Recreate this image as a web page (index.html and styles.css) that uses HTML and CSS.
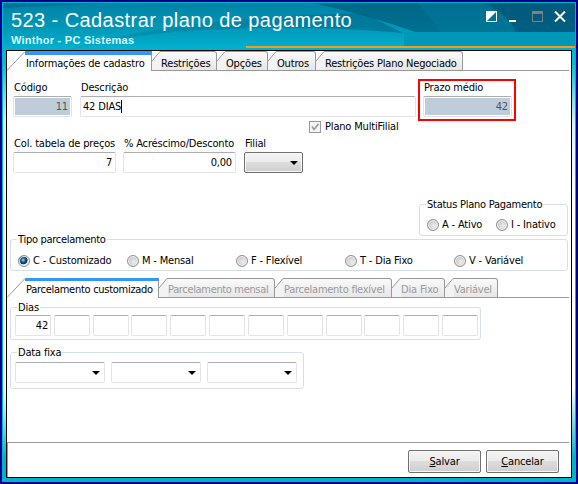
FILE: index.html
```html
<!DOCTYPE html>
<html lang="pt-BR">
<head>
<meta charset="utf-8">
<title>523 - Cadastrar plano de pagamento</title>
<link rel="stylesheet" href="styles.css">
</head>
<body>
<main class="window">
  <svg class="backdrop" viewBox="0 0 572 48" aria-hidden="true">
    <defs>
      <linearGradient id="sky" x2="0" y2="1"><stop offset="0" stop-color="#0082a6"/><stop offset=".5" stop-color="#0097b7"/><stop offset="1" stop-color="#00b4d0"/></linearGradient>
      <linearGradient id="ray" x2="1" y2="0"><stop offset="0" stop-color="#007d9f" stop-opacity=".3"/><stop offset="1" stop-color="#006084" stop-opacity=".55"/></linearGradient>
    </defs>
    <rect width="572" height="48" fill="url(#sky)"/>
    <path d="M0 5Q55 2 120 0H0Z" fill="#00668c" opacity=".6"/>
    <path d="M62 48Q160 15 360 10L400 30Q290 20 170 29Q110 35 62 48Z" fill="url(#ray)"/>
    <path d="M310 0H572V29H412Q365 12 310 0Z" fill="#00597a" opacity=".65"/>
    <path d="M480 0H572V29H513Q505 12 480 0Z" fill="#00476a" opacity=".4"/>
    <path d="M415 0H485Q506 12 513 29H438Z" fill="#0083a5" opacity=".3"/>
    <rect x="401" y="29" width="171" height="14" fill="#0098b8"/>
    <rect x="243" y="43" width="329" height="2" fill="#ff9a16"/>
  </svg>
  <header class="titlebar">
    <div>
      <h1>523 - Cadastrar plano de pagamento</h1>
      <p>Winthor - PC Sistemas</p>
    </div>
    <svg class="controls" width="81" height="12" viewBox="0 0 81 12" aria-hidden="true">
      <path d="M.5.5H10.5V10.5H.5Z" fill="none" stroke="#fff"/><path d="M0 0H11L0 11Z" fill="#fff"/>
      <path d="M23 9H30V11H23Z" fill="#fff"/>
      <path d="M46 0H57V11H46ZM47 3V10H56V3Z" fill="#808080" fill-rule="evenodd"/>
      <path d="M69 .5L79 10.5M79 .5L69 10.5" stroke="#fff" stroke-width="2"/>
    </svg>
  </header>

  <section class="panel">
    <nav class="tabs">
      <div class="tab active t1"><svg width="18" height="20"><path d="M0 19.5L18 .5"/></svg><span>Informações de cadastro</span></div>
      <div class="tab t2"><svg width="9" height="20"><path class="fill" d="M0 20V10L8 1H9V20Z"/><path d="M0 10L8 .5H9M0 19.5H9"/></svg><span>Restrições</span></div>
      <div class="tab t3"><svg width="9" height="20"><path class="fill" d="M0 20V10L8 1H9V20Z"/><path d="M0 10L8 .5H9M0 19.5H9"/></svg><span>Opções</span></div>
      <div class="tab t4"><svg width="9" height="20"><path class="fill" d="M0 20V10L8 1H9V20Z"/><path d="M0 10L8 .5H9M0 19.5H9"/></svg><span>Outros</span></div>
      <div class="tab t5"><svg width="9" height="20"><path class="fill" d="M0 20V10L8 1H9V20Z"/><path d="M0 10L8 .5H9M0 19.5H9"/></svg><span>Restrições Plano Negociado</span></div>
    </nav>

    <div class="row main-row">
      <label class="field code"><span>Código</span><span class="input disabled">11</span></label>
      <label class="field desc"><span>Descrição</span><span class="input left">42 DIAS<i class="caret"></i></span></label>
      <label class="field term"><span>Prazo médio</span><span class="input disabled">42</span></label>
    </div>
    <div class="multi">
      <svg width="12" height="12"><rect x=".5" y=".5" width="11" height="11" fill="#f4f4f4" stroke="#9a9a9a"/><path d="M3 5.5L5 8.5L9.5 3" fill="none" stroke="#999" stroke-width="1.6"/></svg>
      <span>Plano MultiFilial</span>
    </div>
    <div class="row second-row">
      <label class="field col"><span>Col. tabela de preços</span><span class="input">7</span></label>
      <label class="field pct"><span>% Acréscimo/Desconto</span><span class="input">0,00</span></label>
      <label class="field branch"><span>Filial</span><span class="combo button-face"><svg width="8" height="4"><path d="M0 0H8L4 4Z"/></svg></span></label>
    </div>

    <div class="group status">
      <span class="legend">Status Plano Pagamento</span>
      <span class="radio"><i></i>A - Ativo</span><span class="radio"><i></i>I - Inativo</span>
    </div>
    <div class="group kind">
      <span class="legend">Tipo parcelamento</span>
      <span class="radio on"><i></i>C - Customizado</span><span class="radio"><i></i>M - Mensal</span><span class="radio"><i></i>F - Flexível</span><span class="radio"><i></i>T - Dia Fixo</span><span class="radio"><i></i>V - Variável</span>
    </div>

    <nav class="tabs lower">
      <div class="tab active u1"><svg width="18" height="20"><path d="M0 19.5L18 .5"/></svg><span>Parcelamento customizado</span></div>
      <div class="tab u2"><svg width="9" height="20"><path class="fill" d="M0 20V10L8 1H9V20Z"/><path d="M0 10L8 .5H9M0 19.5H9"/></svg><span>Parcelamento mensal</span></div>
      <div class="tab u3"><svg width="9" height="20"><path class="fill" d="M0 20V10L8 1H9V20Z"/><path d="M0 10L8 .5H9M0 19.5H9"/></svg><span>Parcelamento flexível</span></div>
      <div class="tab u4"><svg width="9" height="20"><path class="fill" d="M0 20V10L8 1H9V20Z"/><path d="M0 10L8 .5H9M0 19.5H9"/></svg><span>Dia Fixo</span></div>
      <div class="tab u5"><svg width="9" height="20"><path class="fill" d="M0 20V10L8 1H9V20Z"/><path d="M0 10L8 .5H9M0 19.5H9"/></svg><span>Variável</span></div>
    </nav>

    <div class="group days">
      <span class="legend">Dias</span>
      <span class="input">42</span><span class="input"></span><span class="input"></span><span class="input"></span><span class="input"></span><span class="input"></span><span class="input"></span><span class="input"></span><span class="input"></span><span class="input"></span><span class="input"></span><span class="input"></span>
    </div>
    <div class="group dates">
      <span class="legend">Data fixa</span>
      <span class="input combo"><svg width="8" height="4"><path d="M0 0H8L4 4Z"/></svg></span><span class="input combo"><svg width="8" height="4"><path d="M0 0H8L4 4Z"/></svg></span><span class="input combo"><svg width="8" height="4"><path d="M0 0H8L4 4Z"/></svg></span>
    </div>

    <footer>
      <button class="button-face"><u>S</u>alvar</button>
      <button class="button-face"><u>C</u>ancelar</button>
    </footer>
  </section>
</main>
</body>
</html>
```
FILE: styles.css
```css
* { box-sizing: border-box; }
body {
  margin: 0;
  width: 578px;
  height: 484px;
  overflow: hidden;
  background: #00008b;
  font: 11px/14px "DejaVu Sans Condensed", "DejaVu Sans", sans-serif;
  font-stretch: condensed;
  letter-spacing: -0.17px;
  color: #000;
  padding: 2px;
}
.window {
  position: relative;
  width: 574px;
  height: 480px;
  border: 1px solid #00b4c8;
  background: linear-gradient(#00b4d0 0, #00c0d0 60px, #d8f4f8 120px, #fff 200px, #fff 385px, #00b4c8 455px);
  padding: 0 3px 3px;
}
.backdrop { position: absolute; left: 0; top: 0; width: 572px; height: 48px; }
.titlebar {
  position: relative;
  height: 47px;
  display: flex;
  justify-content: space-between;
  padding: 4px 5px 0 5px;
  color: #fff;
  font-family: "Liberation Sans", Arial, sans-serif;
}
h1 { margin: 0; font-size: 20px; line-height: 26px; font-weight: 400; letter-spacing: 0.42px; white-space: nowrap; }
.titlebar p { margin: 0; font-size: 11px; line-height: 14px; font-weight: 700; letter-spacing: 0.26px; color: #d8f8ff; }
.controls { margin-top: 4px; }
.panel {
  position: relative;
  width: 566px;
  height: 428px;
  border: 1px solid #000;
  background: #fff;
  display: flex;
  flex-direction: column;
  white-space: nowrap;
}
.tabs { display: flex; height: 20px; flex: none; background: linear-gradient(#999, #999) 145px 19px / 417px 1px no-repeat; }
.tab { display: flex; height: 20px; }
.tab svg { flex: none; display: block; }
.tab path { fill: none; stroke: #999; }
.tab .fill { fill: #f3f3f3; stroke: none; }
.tab span {
  flex: 1;
  border: solid #999;
  border-width: 1px 1px 1px 0;
  border-top-right-radius: 3px;
  background: linear-gradient(#fafafa, #e6e6e6);
  line-height: 23px;
  height: 20px;
}
.tab.active span { background: #fff; border-width: 4px 1px 0 0; border-top-color: #3296fa; border-radius: 0; line-height: 17px; padding-left: 1px; }
.t1 { width: 145px; } .t2 { width: 65px; } .t3 { width: 51px; } .t4 { width: 48px; } .t5 { width: 147px; letter-spacing: -0.2px; }
.u1 { width: 152px; letter-spacing: -0.28px; } .u2 { width: 116px; letter-spacing: -0.34px; } .u3 { width: 117px; letter-spacing: -0.26px; } .u4 { width: 53px; } .u5 { width: 53px; letter-spacing: -0.22px; }
.row { display: flex; }
.field { display: flex; flex-direction: column; }
.field > span:first-child { padding-left: 1px; height: 15px; }
.input {
  display: block;
  height: 21px;
  border: 1px solid #e2e4ea;
  border-top-color: #abadb3;
  border-radius: 2px;
  line-height: 19px;
  padding-right: 3px;
  text-align: right;
  background: #fff;
}
.disabled { background: #bfcddb; color: #555; box-shadow: inset 0 0 0 1px #fff; }
.left { text-align: left; padding-left: 2px; }
.caret { display: inline-block; width: 1px; height: 13px; background: #000; vertical-align: -3px; }
.main-row { margin: 8px 0 0 6px; height: 42px; }
.main-row .code, .main-row .desc { padding-top: 2px; }
.code { width: 59px; margin-right: 8px; }
.desc { width: 336px; margin-right: 2px; }
.term { width: 98px; height: 42px; border: 2px solid #f00; padding: 0 2px 0 3px; }
.multi { display: flex; align-items: center; gap: 4px; margin: -1px 0 0 302px; height: 14px; }
.second-row { margin: 2px 0 0 6px; height: 37px; padding-top: 1px; }
.col { width: 103px; margin-right: 7px; }
.pct { width: 113px; margin-right: 8px; }
.branch { width: 59px; }
.combo { display: flex; align-items: center; justify-content: flex-end; padding-right: 4px; }
.button-face { border: 1px solid #707070; border-radius: 2px; background: linear-gradient(#f3f3f3, #ebebeb 49%, #dcdcdc 50%, #cfcfcf); box-shadow: inset 0 0 0 1px #f8f8f8; }
.branch .combo { height: 21px; }
.group { position: relative; border: 1px solid #d5dfe5; border-radius: 3px; display: flex; flex: none; }
.legend { position: absolute; left: 6px; top: -7px; background: #fff; padding: 0 1px; }
.radio { display: flex; align-items: center; gap: 3px; }
.radio i { width: 12px; height: 12px; border: 1px solid #8e8f8f; border-radius: 50%; background: radial-gradient(circle at 60% 60%, #eee 0, #c5c7c9 70%); box-shadow: inset 0 0 0 1px #f4f4f4; }
.radio.on i { background: radial-gradient(circle at 42% 40%, #8fe0ff 0, #17658f 25%, #0b2e4a 48%, #e0e4e6 56%); }
.status { width: 149px; height: 32px; margin: 31px 0 0 412px; padding: 11px 0 0 7px; }
.status .legend { letter-spacing: -0.25px; }
.status .radio { width: 69px; height: 20px; margin-top: -1px; }
.kind { width: 558px; height: 32px; margin: 3px 0 0 3px; padding: 11px 0 0 7px; }
.kind .legend { letter-spacing: -0.28px; }
.kind .radio { width: 109px; height: 20px; }
.lower { margin-top: 7px; background-position: 152px 19px; background-size: 410px 1px; }
.lower .tab:not(.active) { color: #999; }
.lower .tab:not(.active) span { line-height: 22px; }
.lower .tab.active span { border-top-width: 3px; }
.days { width: 471px; height: 33px; margin: 9px 0 0 3px; padding: 7px 2px 0 4px; gap: 2.8px; }
.days .input { flex: 1; padding-right: 2px; }
.dates { width: 294px; height: 37px; margin: 12px 0 0 3px; padding: 9px 0 0 4px; gap: 6px; }
.dates .input { width: 90px; }
footer { margin-top: auto; margin-right: 2px; height: 35px; border: solid #999; border-width: 1px 0 0 1px; display: flex; justify-content: flex-end; gap: 5px; padding: 7px 10px 0 0; }
button { width: 73px; height: 23px; font: inherit; letter-spacing: inherit; padding: 0; color: #000; }
```
